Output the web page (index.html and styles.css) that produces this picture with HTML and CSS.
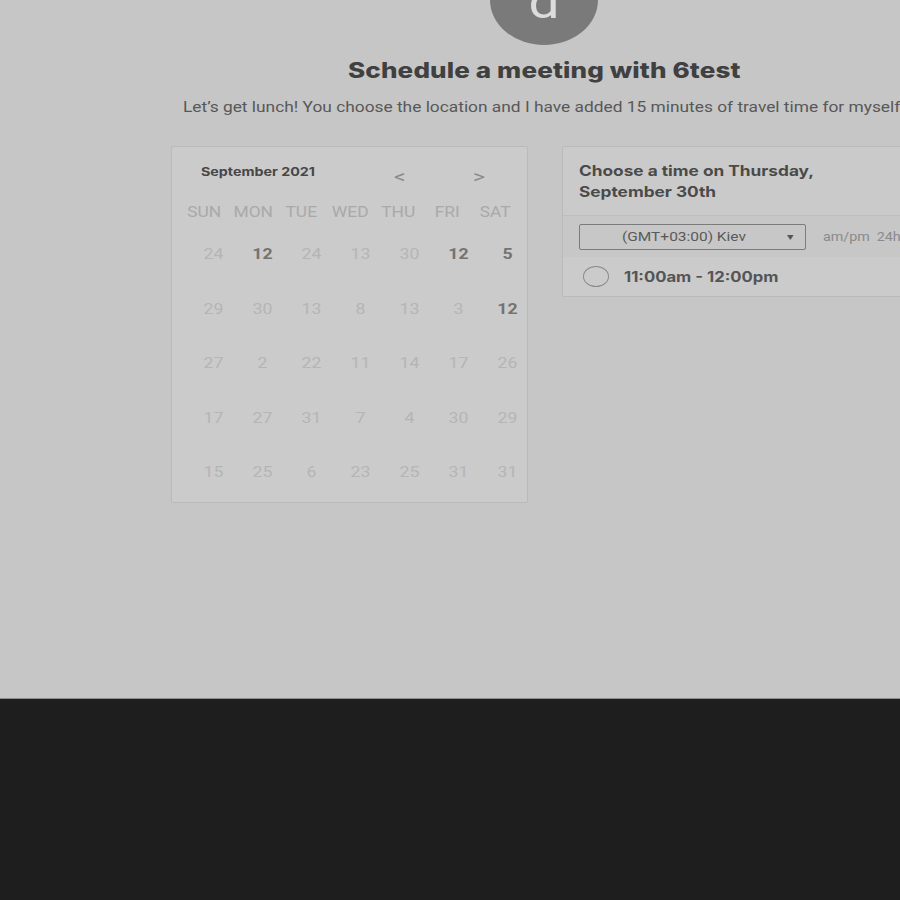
FILE: index.html
```html
<!DOCTYPE html>
<html>
<head>
<meta charset="utf-8">
<link rel="stylesheet" href="styles.css">
</head>
<body>
<div class="page">
  <div class="wrap">
    <div class="avatar"><span class="avatar-letter">d</span></div>
    <h1 class="title"><span class="wide">Schedule a meeting with 6test</span></h1>
    <p class="subtitle"><span class="wide-s">Let’s get lunch! You choose the location and I have added 15 minutes of travel time for myself</span></p>
    <div class="panels">
      <div class="card calendar">
        <div class="cal-head">
          <span class="month wide-l">September 2021</span>
          <span class="nav prev">&lt;</span>
          <span class="nav next">&gt;</span>
        </div>
        <div class="weekdays">
          <span>SUN</span><span>MON</span><span>TUE</span><span>WED</span><span>THU</span><span>FRI</span><span>SAT</span>
        </div>
        <div class="days">
          <span>24</span><span class="on">12</span><span>24</span><span>13</span><span>30</span><span class="on">12</span><span class="on">5</span>
          <span>29</span><span>30</span><span>13</span><span>8</span><span>13</span><span>3</span><span class="on">12</span>
          <span>27</span><span>2</span><span>22</span><span>11</span><span>14</span><span>17</span><span>26</span>
          <span>17</span><span>27</span><span>31</span><span>7</span><span>4</span><span>30</span><span>29</span>
          <span>15</span><span>25</span><span>6</span><span>23</span><span>25</span><span>31</span><span>31</span>
        </div>
      </div>
      <div class="card times">
        <div class="times-head"><span class="wide-l">Choose a time on Thursday,<br>September 30th</span></div>
        <div class="tz-row">
          <div class="select"><span class="select-text wide-l">(GMT+03:00) Kiev</span><span class="caret">&#9662;</span></div>
          <span class="fmt wide-l">am/pm&nbsp;&nbsp;24h</span>
        </div>
        <div class="slot">
          <span class="radio"></span>
          <span class="slot-text wide-l">11:00am - 12:00pm</span>
        </div>
      </div>
    </div>
  </div>
</div>
<div class="footer"></div>
</body>
</html>
```
FILE: styles.css
```css
html, body {
  margin: 0;
  padding: 0;
  overflow: hidden;
  background: #1e1e1e;
}
body {
  width: 900px;
  height: 900px;
  font-family: Roboto, "Liberation Sans", sans-serif;
}
.wide {
  display: inline-block;
  transform: scaleX(1.24);
}
.wide-l {
  display: inline-block;
  transform: scaleX(1.19);
  transform-origin: left center;
}
.wide-s {
  display: inline-block;
  transform: scaleX(1.195);
  transform-origin: left center;
}
.page {
  height: 698px;
  background: #c6c6c6;
  border-bottom: 1px solid #8c8c8c;
  overflow: hidden;
}
.wrap {
  margin-left: 171px;
  width: 746px;
  display: flex;
  flex-direction: column;
  align-items: center;
}
.avatar {
  width: 108px;
  height: 90px;
  border-radius: 50%;
  background: #7a7a7a;
  margin-top: -45px;
  display: flex;
  justify-content: center;
  align-items: flex-end;
}
.avatar-letter {
  display: inline-block;
  color: #dcdcdc;
  font-family: Roboto, sans-serif;
  font-size: 46px;
  line-height: 1;
  margin-bottom: 20px;
  transform: scaleX(1.2);
}
.title {
  margin: 13px 0 0;
  font-family: Inter, sans-serif;
  font-weight: 800;
  font-size: 21px;
  color: #404040;
  line-height: 26px;
  letter-spacing: 0.1px;
}
.subtitle {
  margin: 14px 0 0 12px;
  font-size: 14.5px;
  color: #585858;
  white-space: nowrap;
  line-height: 20px;
  align-self: flex-start;
}
.panels {
  align-self: stretch;
  display: flex;
  gap: 34px;
  margin-top: 28px;
}
.card {
  background: #cbcbcb;
  border: 1px solid #bababa;
  border-radius: 2px;
  box-sizing: border-box;
}
.calendar {
  width: 357px;
  height: 357px;
  padding: 0 0 0 8px;
}
.cal-head {
  display: flex;
  align-items: center;
  height: 50px;
}
.month {
  font-family: Inter, sans-serif;
  font-weight: 700;
  font-size: 12px;
  color: #474747;
  margin-left: 21px;
  margin-top: -2px;
}
.nav {
  font-family: Roboto, sans-serif;
  color: #8a8a8a;
  font-size: 19px;
  display: inline-block;
  transform: scaleX(1.2);
}
.prev { margin-left: 98px; margin-top: 8px; }
.next { margin-left: 70px; margin-top: 8px; }
.weekdays {
  display: grid;
  grid-template-columns: repeat(7, 48.5px);
  font-size: 14.5px;
  color: #a9a9a9;
  text-align: center;
  height: 32px;
  line-height: 32px;
}
.weekdays span {
  transform: scaleX(1.2);
}
.days {
  display: grid;
  grid-template-columns: repeat(7, 49px);
  grid-auto-rows: 54.6px;
  padding-left: 9px;
  margin-top: 12px;
  font-size: 15px;
  color: #b5b5b5;
  text-align: center;
}
.days span {
  line-height: 26px;
  transform: scaleX(1.18);
}
.days .on {
  color: #737373;
  font-weight: 700;
}
.times {
  width: 356px;
  height: 151px;
  display: flex;
  flex-direction: column;
}
.times-head {
  font-family: Inter, sans-serif;
  font-weight: 700;
  font-size: 14.5px;
  color: #4a4a4a;
  line-height: 21px;
  padding: 13px 16px 0;
  height: 55px;
  border-bottom: 1px solid #bebebe;
  background: #cacaca;
}
.tz-row {
  display: flex;
  align-items: center;
  height: 41px;
  padding-left: 16px;
  background: #c7c7c7;
}
.select {
  width: 227px;
  height: 26px;
  box-sizing: border-box;
  border: 1px solid #7c7c7c;
  border-radius: 2px;
  display: flex;
  align-items: center;
  font-size: 13px;
  color: #5a5a5a;
}
.select-text { margin-left: 42px; }
.caret {
  margin-left: auto;
  margin-right: 12px;
  font-size: 10px;
  color: #555;
  display: inline-block;
  transform: scaleX(1.3);
}
.fmt {
  margin-left: 17px;
  font-size: 12px;
  color: #8a8a8a;
}
.slot {
  display: flex;
  align-items: center;
  flex: 1;
  padding-left: 20px;
  background: #cbcbcb;
}
.radio {
  width: 26px;
  height: 21px;
  border: 1.5px solid #8a8a8a;
  border-radius: 50%;
  box-sizing: border-box;
}
.slot-text {
  margin-left: 15px;
  font-family: Inter, sans-serif;
  font-weight: 700;
  font-size: 14px;
  color: #555;
}
.footer {
  height: 201px;
  background: #1e1e1e;
}
```
